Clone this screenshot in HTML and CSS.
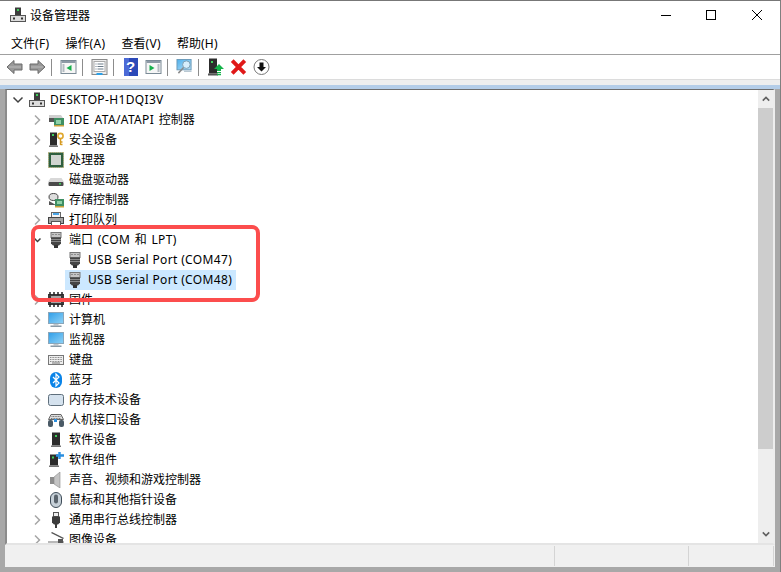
FILE: index.html
```html
<!DOCTYPE html>
<html lang="zh-CN">
<head>
<meta charset="utf-8">
<title>设备管理器</title>
<link rel="stylesheet" href="styles.css">
</head>
<body>
<svg class="defs" aria-hidden="true">
  <defs>
    <linearGradient id="g-screen" x1="0" y1="0" x2="1" y2="1"><stop offset="0" stop-color="#2f9ee8"/><stop offset="1" stop-color="#8fd2f6"/></linearGradient>
    <linearGradient id="g-scan" x1="0" y1="0" x2="1" y2="1"><stop offset="0" stop-color="#4fb0ec"/><stop offset="1" stop-color="#b4e0f8"/></linearGradient>
  </defs>
  <symbol id="i-pc" viewBox="0 0 16 16"><rect x="5" y="0.500" width="6" height="8" fill="#3c3c3c"/><rect x="7" y="2" width="2" height="2" fill="#3fd05a"/><rect x="0.500" y="8.500" width="15" height="6" fill="#dcdcdc" stroke="#555"/><rect x="3" y="10.500" width="2" height="2" fill="#333"/><rect x="11" y="10.500" width="2" height="2" fill="#333"/></symbol>
  <symbol id="i-ide" viewBox="0 0 16 16"><path d="M1 3h12l2 3v1H1z" fill="#cfcfcf"/><rect x="1" y="6" width="9" height="4" fill="#555"/><rect x="6" y="6" width="10" height="8" fill="#3f8f63"/><rect x="8" y="8" width="5" height="4" fill="#8fd0a8"/><rect x="6" y="13" width="10" height="1.500" fill="#c9a23c"/></symbol>
  <symbol id="i-sec" viewBox="0 0 16 16"><rect x="2" y="0.500" width="7" height="13" fill="#2c2c2c"/><rect x="4" y="2" width="2" height="2" fill="#3fd05a"/><rect x="1" y="13.500" width="9" height="1.500" fill="#777"/><circle cx="12.500" cy="4" r="2.600" fill="none" stroke="#e0a82e" stroke-width="1.600"/><path d="M12.500 6.500V13M12.500 10h2M12.500 12.500h2" stroke="#d69a20" stroke-width="1.400" fill="none"/></symbol>
  <symbol id="i-cpu" viewBox="0 0 16 16"><rect x="0.500" y="0.500" width="15" height="15" fill="#2f5f3f"/><rect x="0" y="0" width="16" height="16" fill="none" stroke="#b49a3c" stroke-width="1" stroke-dasharray="1 1"/><rect x="3" y="3" width="10" height="10" fill="#d0d4d0"/></symbol>
  <symbol id="i-disk" viewBox="0 0 16 16"><path d="M2.500 6h11L16 10H0z" fill="#d8d8d8"/><rect x="0.500" y="10" width="15" height="4" rx="1" fill="#4a4a4a"/><rect x="11" y="11" width="2" height="1.500" fill="#3fd05a"/></symbol>
  <symbol id="i-stor" viewBox="0 0 16 16"><ellipse cx="5.500" cy="5" rx="4.500" ry="3.500" fill="#ddd" stroke="#444"/><path d="M1 9l7 4H1z" fill="#555"/><rect x="7" y="7" width="9" height="7" fill="#3f8f63"/><rect x="9" y="9" width="5" height="3" fill="#8fd0a8"/><rect x="7" y="14" width="9" height="1.500" fill="#c9a23c"/></symbol>
  <symbol id="i-print" viewBox="0 0 16 16"><rect x="3.500" y="0.500" width="9" height="5" fill="#f4f4f4" stroke="#666"/><rect x="5" y="1" width="6" height="2" fill="#4aa6e8"/><rect x="0.500" y="5.500" width="15" height="6" fill="#a4a4a4" stroke="#444"/><rect x="3.500" y="9.500" width="9" height="5" fill="#fff" stroke="#555"/></symbol>
  <symbol id="i-port" viewBox="0 0 16 16"><rect x="3" y="0.500" width="10" height="5" fill="#c4c4c4" stroke="#777"/><path d="M4.500 2.500h1M7.500 2.500h1M10.500 2.500h1" stroke="#555"/><path d="M3 5.500h10v6l-2 2H5l-2-2z" fill="#454545"/><path d="M3 7.500h10M3 9.500h10" stroke="#888"/><rect x="6" y="13" width="4" height="3" fill="#333"/></symbol>
  <symbol id="i-fw" viewBox="0 0 16 16"><rect x="0" y="2" width="16" height="11" fill="#3a3a3a"/><rect x="3" y="4" width="10" height="7" fill="#a6a6a6"/><path d="M2 0v3M6 0v3M10 0v3M14 0v3M2 12v3M6 12v3M10 12v3M14 12v3" stroke="#222" stroke-width="1.500"/></symbol>
  <symbol id="i-mon" viewBox="0 0 16 16"><rect x="0.500" y="0.500" width="15" height="11" fill="url(#g-screen)" stroke="#8aa6ba"/><rect x="5.500" y="12" width="5" height="1.500" fill="#c0c6ca"/><rect x="2.500" y="13.500" width="11" height="1.500" fill="#8a9aa6"/></symbol>
  <symbol id="i-key" viewBox="0 0 16 16"><rect x="0.500" y="3.500" width="15" height="9" fill="#eee" stroke="#777"/><path d="M2 5.500h12M2 7.500h12M2 9.500h12" stroke="#8a8a8a" stroke-dasharray="1 .6"/><path d="M4 11h8" stroke="#777"/></symbol>
  <symbol id="i-bt" viewBox="0 0 16 16"><rect x="2" y="0" width="12" height="16" rx="6" fill="#0a84e8"/><path d="M5 5l6 6-3 3V2l3 3-6 6" fill="none" stroke="#fff" stroke-width="1.200"/></symbol>
  <symbol id="i-mem" viewBox="0 0 16 16"><rect x="0.500" y="2.500" width="15" height="11" rx="2" fill="#d5e2ee" stroke="#5f6f7c"/></symbol>
  <symbol id="i-hid" viewBox="0 0 16 16"><path d="M3 2.500h10l2.500 5h-15z" fill="#ddd" stroke="#666"/><path d="M3.500 4.500h9M3 6.500h10" stroke="#777" stroke-dasharray="1 .6"/><rect x="0" y="8" width="5" height="7" rx="2" fill="#4a5a66"/><rect x="11" y="8" width="5" height="7" rx="2" fill="#4a5a66"/><rect x="6" y="7" width="3" height="3" fill="#2a8fe0"/></symbol>
  <symbol id="i-sw" viewBox="0 0 16 16"><rect x="4" y="0.500" width="8" height="13" fill="#2c2c2c"/><rect x="7" y="3" width="2" height="2" fill="#3fd05a"/><rect x="3" y="13.500" width="10" height="1.500" fill="#777"/></symbol>
  <symbol id="i-comp" viewBox="0 0 16 16"><rect x="2" y="2.500" width="8" height="11" fill="#2c2c2c"/><rect x="4" y="4.500" width="2" height="2" fill="#3fd05a"/><rect x="1" y="13.500" width="10" height="1.500" fill="#777"/><path d="M11.500 0v7M8 3.500h8" stroke="#2a8fe0" stroke-width="2.400"/></symbol>
  <symbol id="i-snd" viewBox="0 0 16 16"><path d="M2 5h4v7H2z" fill="#8c8c8c"/><path d="M6 5l6-5v16l-6-4z" fill="#c4c4c4" stroke="#8a8a8a" stroke-width=".6"/></symbol>
  <symbol id="i-mouse" viewBox="0 0 16 16"><rect x="2.500" y="0.500" width="11" height="15" rx="5.500" fill="#c6d0d8" stroke="#3e4c58"/><rect x="6" y="2.500" width="4" height="9" rx="2" fill="#59636c"/></symbol>
  <symbol id="i-usb" viewBox="0 0 16 16"><rect x="5.500" y="0.500" width="5" height="4" fill="#eee" stroke="#555"/><path d="M4 4.500h8v6l-2 2H6l-2-2z" fill="#3c3c3c"/><rect x="7" y="12" width="2" height="4" fill="#3c3c3c"/></symbol>
  <symbol id="i-img" viewBox="0 0 16 16"><path d="M4 0l12 6-1 1L3 1z" fill="#555"/><path d="M0 9h16v5H0z" fill="#b8b8b8"/><rect x="10" y="7" width="5" height="4" fill="#555"/></symbol>

  <symbol id="t-back" viewBox="0 0 17 16"><path d="M8 1.500L1 8l7 6.500V11h8V5H8z" fill="#999" stroke="#6a6a6a"/><path d="M3 8h12" stroke="#bbb"/></symbol>
  <symbol id="t-fwd" viewBox="0 0 17 16"><path d="M9 1.500L16 8l-7 6.500V11H1V5h8z" fill="#999" stroke="#6a6a6a"/><path d="M2 8h12" stroke="#bbb"/></symbol>
  <symbol id="t-winl" viewBox="0 0 16 16"><rect x="0.500" y="1.500" width="15" height="13" fill="#f6f6f6" stroke="#7a8a96"/><rect x="1" y="2" width="14" height="2" fill="#8d9aa6"/><path d="M11 6v6L6 9z" fill="#17b04c"/><path d="M2 6h2M2 8h2M2 10h2M2 12h2" stroke="#70808c"/></symbol>
  <symbol id="t-doc" viewBox="0 0 16 16"><rect x="0.500" y="0.500" width="15" height="15" fill="#ececec" stroke="#8a8a8a"/><rect x="2.500" y="2.500" width="11" height="10" fill="#fff" stroke="#aaa"/><path d="M4 5h1M6 5h6M4 7.500h1M6 7.500h6M4 10h1M6 10h6" stroke="#6a7a88"/><rect x="5" y="14" width="6" height="2" fill="#2aa0e8"/></symbol>
  <symbol id="t-winr" viewBox="0 0 16 16"><rect x="0.500" y="1.500" width="15" height="13" fill="#f6f6f6" stroke="#7a8a96"/><rect x="1" y="2" width="14" height="2" fill="#8d9aa6"/><path d="M4 6v6l5-3z" fill="#17b04c"/><path d="M12 6h2M12 8h2M12 10h2M12 12h2" stroke="#70808c"/></symbol>
  <symbol id="t-scan" viewBox="0 0 17 17"><rect x="0.500" y="0.500" width="15" height="11" fill="url(#g-scan)" stroke="#6a9ab8"/><circle cx="10.500" cy="6" r="4" fill="#d6eefc" stroke="#7a9cb0"/><path d="M7.500 9L2 15" stroke="#8a8a8a" stroke-width="1.600"/><path d="M8 13h8" stroke="#9ab0be"/></symbol>
  <symbol id="t-up" viewBox="0 0 16 18"><rect x="1" y="0.500" width="8" height="15" fill="#2c2c2c"/><rect x="3" y="3" width="2" height="2" fill="#3fd05a"/><rect x="0" y="15.500" width="10" height="2" fill="#555"/><path d="M11 6l5 5h-3v2H9v-2H6z" fill="#14b34a"/><path d="M9 14h4v1.300H9zM9 16h4v1.300H9z" fill="#14b34a"/></symbol>
  <symbol id="t-x" viewBox="0 0 14 14"><path d="M1.500 1.500l11 11M12.500 1.500l-11 11" stroke="#e01818" stroke-width="3.400"/></symbol>
  <symbol id="t-down" viewBox="0 0 16 16"><circle cx="8" cy="8" r="7.500" fill="#fff" stroke="#777"/><path d="M6 3.500h4V8h2.500L8 12.500 3.500 8H6z" fill="#111"/></symbol>
  <symbol id="c-r" viewBox="0 0 12 12"><path d="M4 1.500L8.500 6 4 10.500" fill="none" stroke="#a6a6a6" stroke-width="1.500"/></symbol>
  <symbol id="c-d" viewBox="0 0 12 12"><path d="M1.500 3.500L6 8l4.500-4.500" fill="none" stroke="#404040" stroke-width="1.500"/></symbol>
  <symbol id="c-e" viewBox="0 0 12 12"><path d="M3.500 4.500L6.500 7.500l3-3" fill="none" stroke="#404040" stroke-width="1.500"/></symbol>
</svg>

<div class="window">
  <header class="titlebar">
    <svg class="app-ic"><use href="#i-pc"/></svg>
    <span class="title">设备管理器</span>
    <div class="caption">
      <svg class="cap-btn" viewBox="0 0 46 20"><path d="M19 10.500h10" stroke="#000"/></svg>
      <svg class="cap-btn" viewBox="0 0 46 20"><rect x="18.500" y="5.500" width="9" height="9" fill="none" stroke="#000"/></svg>
      <svg class="cap-btn" viewBox="0 0 46 20"><path d="M18 5l10 10M28 5L18 15" stroke="#000" fill="none"/></svg>
    </div>
  </header>
  <nav class="menubar">
    <span>文件<span class="lat">(F)</span></span><span>操作<span class="lat">(A)</span></span><span>查看<span class="lat">(V)</span></span><span>帮助<span class="lat">(H)</span></span>
  </nav>
  <div class="toolbar">
    <span class="tb"><svg class="tb-ic"><use href="#t-back"/></svg></span>
    <span class="tb"><svg class="tb-ic"><use href="#t-fwd"/></svg></span>
    <i class="sep"></i>
    <span class="tb"><svg class="tb-ic"><use href="#t-winl"/></svg></span>
    <i class="sep"></i>
    <span class="tb"><svg class="tb-ic"><use href="#t-doc"/></svg></span>
    <i class="sep"></i>
    <span class="tb"><span class="help">?</span></span>
    <span class="tb"><svg class="tb-ic"><use href="#t-winr"/></svg></span>
    <i class="sep"></i>
    <span class="tb"><svg class="tb-ic"><use href="#t-scan"/></svg></span>
    <i class="sep"></i>
    <span class="tb"><svg class="tb-ic tall"><use href="#t-up"/></svg></span>
    <span class="tb"><svg class="tb-ic"><use href="#t-x"/></svg></span>
    <span class="tb"><svg class="tb-ic"><use href="#t-down"/></svg></span>
  </div>
  <div class="band"></div>
  <div class="blue"></div>
  <main class="body">
    <div class="frame">
      <div class="tree">
        <div class="row root"><svg class="chev"><use href="#c-d"/></svg><svg class="ic"><use href="#i-pc"/></svg><span class="label lat">DESKTOP-H1DQI3V</span></div>
        <div class="row"><svg class="chev"><use href="#c-r"/></svg><svg class="ic"><use href="#i-ide"/></svg><span class="label mix"><span class="lat">IDE ATA/ATAPI</span> 控制器</span></div>
        <div class="row"><svg class="chev"><use href="#c-r"/></svg><svg class="ic"><use href="#i-sec"/></svg><span class="label">安全设备</span></div>
        <div class="row"><svg class="chev"><use href="#c-r"/></svg><svg class="ic"><use href="#i-cpu"/></svg><span class="label">处理器</span></div>
        <div class="row"><svg class="chev"><use href="#c-r"/></svg><svg class="ic"><use href="#i-disk"/></svg><span class="label">磁盘驱动器</span></div>
        <div class="row"><svg class="chev"><use href="#c-r"/></svg><svg class="ic"><use href="#i-stor"/></svg><span class="label">存储控制器</span></div>
        <div class="row"><svg class="chev"><use href="#c-r"/></svg><svg class="ic"><use href="#i-print"/></svg><span class="label">打印队列</span></div>
        <div class="row"><svg class="chev"><use href="#c-e"/></svg><svg class="ic"><use href="#i-port"/></svg><span class="label mix">端口 <span class="lat">(COM</span> 和 <span class="lat">LPT)</span></span></div>
        <div class="row leaf"><svg class="ic"><use href="#i-port"/></svg><span class="label lat">USB Serial Port (COM47)</span></div>
        <div class="row leaf selected"><svg class="ic"><use href="#i-port"/></svg><span class="label lat">USB Serial Port (COM48)</span></div>
        <div class="row"><svg class="chev"><use href="#c-r"/></svg><svg class="ic"><use href="#i-fw"/></svg><span class="label">固件</span></div>
        <div class="row"><svg class="chev"><use href="#c-r"/></svg><svg class="ic"><use href="#i-mon"/></svg><span class="label">计算机</span></div>
        <div class="row"><svg class="chev"><use href="#c-r"/></svg><svg class="ic"><use href="#i-mon"/></svg><span class="label">监视器</span></div>
        <div class="row"><svg class="chev"><use href="#c-r"/></svg><svg class="ic"><use href="#i-key"/></svg><span class="label">键盘</span></div>
        <div class="row"><svg class="chev"><use href="#c-r"/></svg><svg class="ic"><use href="#i-bt"/></svg><span class="label">蓝牙</span></div>
        <div class="row"><svg class="chev"><use href="#c-r"/></svg><svg class="ic"><use href="#i-mem"/></svg><span class="label">内存技术设备</span></div>
        <div class="row"><svg class="chev"><use href="#c-r"/></svg><svg class="ic"><use href="#i-hid"/></svg><span class="label">人机接口设备</span></div>
        <div class="row"><svg class="chev"><use href="#c-r"/></svg><svg class="ic"><use href="#i-sw"/></svg><span class="label">软件设备</span></div>
        <div class="row"><svg class="chev"><use href="#c-r"/></svg><svg class="ic"><use href="#i-comp"/></svg><span class="label">软件组件</span></div>
        <div class="row"><svg class="chev"><use href="#c-r"/></svg><svg class="ic"><use href="#i-snd"/></svg><span class="label">声音、视频和游戏控制器</span></div>
        <div class="row"><svg class="chev"><use href="#c-r"/></svg><svg class="ic"><use href="#i-mouse"/></svg><span class="label">鼠标和其他指针设备</span></div>
        <div class="row"><svg class="chev"><use href="#c-r"/></svg><svg class="ic"><use href="#i-usb"/></svg><span class="label">通用串行总线控制器</span></div>
        <div class="row"><svg class="chev"><use href="#c-r"/></svg><svg class="ic"><use href="#i-img"/></svg><span class="label">图像设备</span></div>
      </div>
      <div class="scrollbar">
        <div class="sb-btn"><svg class="sb-arrow" viewBox="0 0 10 6"><path d="M1 5l4-4 4 4" fill="none" stroke="#606060" stroke-width="2"/></svg></div>
        <div class="sb-thumb"></div>
        <div class="sb-track"></div>
        <div class="sb-btn"><svg class="sb-arrow" viewBox="0 0 10 6"><path d="M1 1l4 4 4-4" fill="none" stroke="#606060" stroke-width="2"/></svg></div>
      </div>
    </div>
    <footer class="status"><div class="st a"></div><div class="st b"></div><div class="st c"></div></footer>
  </main>
  <div class="highlight"></div>
</div>
</body>
</html>
```

FILE: styles.css
```css
* { box-sizing: border-box; }
html, body { margin: 0; padding: 0; }
body {
  width: 781px;
  height: 572px;
  overflow: hidden;
  background: #a8a8a8;
  font-family: "Noto Sans", "Noto Sans CJK SC", sans-serif;
  font-size: 12px;
  color: #000;
}
.defs { position: absolute; width: 0; height: 0; }
.lat { letter-spacing: 0.35px; }

.window {
  position: relative;
  width: 781px;
  height: 572px;
  display: flex;
  flex-direction: column;
  border-top: 1px solid #777;
  border-right: 1px solid #808080;
  background: #a8a8a8;
}

.titlebar {
  height: 33px;
  background: #fff;
  display: flex;
  align-items: center;
  padding-left: 10px;
}
.app-ic { width: 16px; height: 16px; margin-right: 4px; margin-top: -5px; }
.title { font-family: "Noto Sans CJK SC", sans-serif; font-size: 12px; line-height: 16px; margin-top: -6px; }
.caption { margin-left: auto; display: flex; margin-top: -6px; }
.cap-btn { width: 46px; height: 20px; display: block; }

.menubar {
  height: 21px;
  background: #fff;
  border-bottom: 1px solid #a0a0a0;
  display: flex;
  gap: 16px;
  padding: 0 0 2px 11px;
  align-items: center;
  font-size: 12px;
}

.toolbar {
  height: 24px;
  background: #fff;
  display: flex;
  align-items: center;
  padding-left: 3px;
}
.tb { width: 23px; height: 20px; flex: none; display: flex; align-items: center; justify-content: center; }
.tb-ic { width: 17px; height: 16px; }
.tb-ic.tall { height: 18px; width: 16px; }
.help {
  width: 14px;
  height: 18px;
  background: linear-gradient(90deg, #4b6ad6 35%, #2b49b8 35%);
  color: #fff;
  font: bold 15px/18px "Liberation Sans", sans-serif;
  text-align: center;
}
.sep { width: 1px; height: 17px; background: #8c8c8c; margin: 0 5px 0 2px; flex: none; }

.band { height: 6px; background: #eeeeee; border-top: 1px solid #dcdcdc; }
.blue { height: 4px; background: #b4cde8; }

.body {
  flex: 1;
  min-height: 0;
  display: flex;
  flex-direction: column;
  padding: 0 5px 5px 5px;
}
.frame {
  flex: none;
  height: 456px;
  display: flex;
  background: #fff;
  border-top: 1px solid #6e6e6e;
  border-left: 2px solid #8c8c8c;
  border-bottom: 2px solid #e4e4e4;
  border-right: 2px solid #ededed;
}
.tree { flex: 1; min-width: 0; overflow: hidden; }
.row {
  height: 20px;
  display: flex;
  align-items: center;
  padding-left: 24px;
  white-space: nowrap;
}
.row.root { padding-left: 5px; }
.row.leaf { padding-left: 60px; }
.chev { width: 12px; height: 12px; flex: none; margin-right: 5px; }
.ic { width: 16px; height: 16px; flex: none; margin-right: 5px; }
.label { line-height: 20px; }
.label.mix { word-spacing: 1.5px; }
.row.selected { position: relative; z-index: 0; }
.row.selected::before {
  content: "";
  position: absolute;
  left: 58px;
  top: 0;
  width: 171px;
  height: 20px;
  background: #cce8ff;
  z-index: -1;
}

.scrollbar { width: 15px; flex: none; display: flex; flex-direction: column; background: #eeeeee; }
.sb-btn { height: 18px; display: flex; align-items: center; justify-content: center; flex: none; }
.sb-arrow { width: 8px; height: 6px; }
.sb-thumb { height: 341px; background: #cdcdcd; flex: none; }
.sb-track { flex: 1; }

.status { height: 22px; flex: none; background: #f0f0f0; display: flex; }
.st { border-right: 1px solid #d4d4d4; margin: 1px 0; }
.st.a { width: 550px; }
.st.b { width: 134px; }
.st.c { width: 85px; }

.highlight {
  position: absolute;
  left: 31px;
  top: 224px;
  width: 229px;
  height: 77px;
  border: 4px solid #fc4d4d;
  border-radius: 8px;
  pointer-events: none;
}
```
